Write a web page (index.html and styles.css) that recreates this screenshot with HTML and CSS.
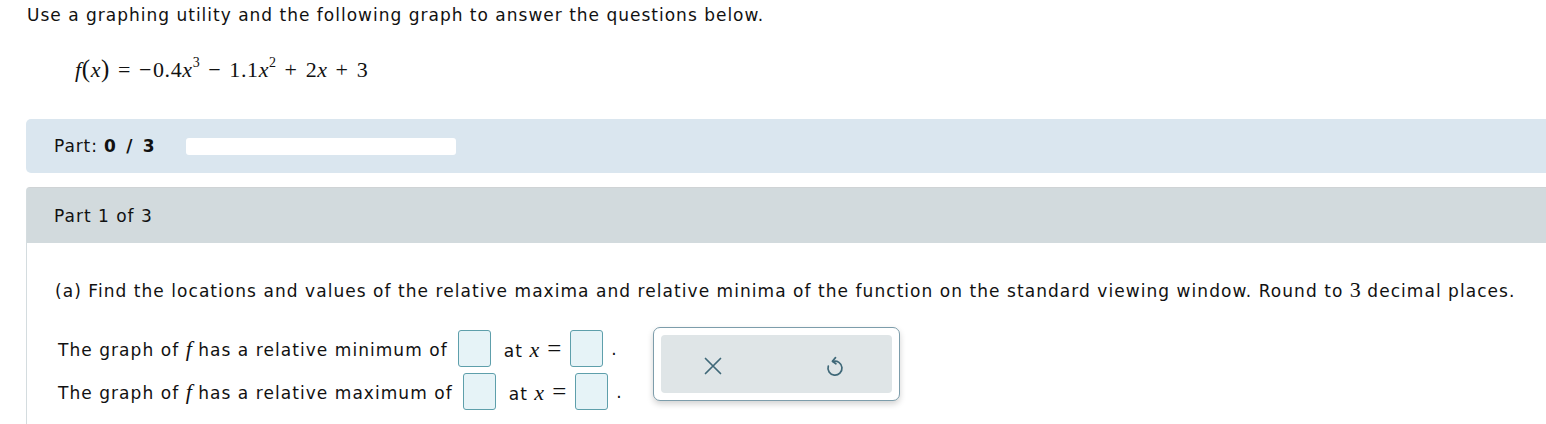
FILE: index.html
```html
<!DOCTYPE html>
<html>
<head>
<meta charset="utf-8">
<link rel="stylesheet" href="styles.css">
</head>
<body>
<div class="intro">Use a graphing utility and the following graph to answer the questions below.</div>
<div class="formula"><span class="it">f</span><span class="paren">(</span><span class="it">x</span><span class="paren">)</span><span class="op">=</span><span class="minus">−</span>0.4<span class="it">x</span><sup>3</sup><span class="op">−</span>1.1<span class="it">x</span><sup>2</sup><span class="op">+</span>2<span class="it">x</span><span class="op">+</span>3</div>

<div class="partbar">
  <span class="partlabel">Part: <b>0 / 3</b></span>
  <span class="progress"></span>
</div>

<div class="panel">
  <div class="panel-head">Part 1 of 3</div>
  <div class="panel-body">
    <p class="question">(a) Find the locations and values of the relative maxima and relative minima of the function on the standard viewing window. Round to <span class="num">3</span> decimal places.</p>
    <div class="answer">
      <div class="rows">
        <div class="row"><span class="txt">The graph of <span class="fi">f</span> has a relative minimum of</span><span class="box"></span><span class="at">at <span class="mx">x</span><span class="eq">=</span></span><span class="box box2"></span><span class="dot">.</span></div>
        <div class="row"><span class="txt">The graph of <span class="fi">f</span> has a relative maximum of</span><span class="box"></span><span class="at">at <span class="mx">x</span><span class="eq">=</span></span><span class="box box2"></span><span class="dot">.</span></div>
      </div>
      <div class="tools">
        <div class="tools-inner">
          <svg class="icon" width="18" height="18" viewBox="0 0 18 18"><path d="M1.5 1.5 L16.5 16.5 M16.5 1.5 L1.5 16.5" stroke="#3f6878" stroke-width="1.7" fill="none" stroke-linecap="round"/></svg>
          <svg class="icon" width="20" height="22" viewBox="0 0 20 22"><path d="M8 6.4 A7 7 0 1 1 3.3 11" stroke="#3f6878" stroke-width="1.7" fill="none" stroke-linecap="round"/><path d="M10.5 2.6 L7.4 6.3 L10.9 8.8" stroke="#3f6878" stroke-width="1.7" fill="none" stroke-linecap="round" stroke-linejoin="round"/></svg>
        </div>
      </div>
    </div>
  </div>
</div>
</body>
</html>
```

FILE: styles.css
```css
html, body {
  margin: 0;
  padding: 0;
  background: #ffffff;
}
body {
  font-family: "DejaVu Sans", Verdana, sans-serif;
  font-size: 17px;
  color: #111;
  width: 1546px;
  overflow: hidden;
}
.intro {
  padding: 5px 0 0 27px;
  line-height: 20px;
  letter-spacing: 1px;
}
.formula {
  font-family: "Liberation Serif", "Times New Roman", serif;
  font-size: 22px;
  padding: 29px 0 0 75px;
  height: 40px;
  line-height: 30px;
  letter-spacing: 0.6px;
}
.formula .it { font-style: italic; }
.formula .paren { font-size: 25px; }
.formula .op { margin: 0 8px; }
.formula .minus { margin-right: 1px; }
.formula sup {
  font-size: 14px;
  vertical-align: 10px;
  line-height: 0;
}
.partbar {
  margin: 25px 0 0 26px;
  height: 54px;
  background: #dae6ef;
  border-radius: 5px 0 0 5px;
  display: flex;
  align-items: center;
  padding-left: 28px;
  letter-spacing: 0.9px;
}
.partlabel {
  width: 132px;
}
.partlabel b { letter-spacing: 2.2px; }
.progress {
  width: 270px;
  height: 17px;
  background: #fff;
  border-radius: 3px;
}
.panel {
  margin: 14px 0 0 26px;
  border-left: 1px solid #d4dcdf;
  border-top: 1px solid #cfd3d5;
  border-radius: 4px 0 0 0;
  height: 240px;
}
.panel-head {
  background: #d2dadd;
  height: 55px;
  display: flex;
  align-items: center;
  padding-left: 27px;
  letter-spacing: 1px;
}
.panel-body {
  padding: 35px 0 0 28px;
}
.question {
  margin: 0;
  line-height: 24px;
  letter-spacing: 1.05px;
}
.num {
  font-family: "Liberation Serif", serif;
  font-size: 22px;
  letter-spacing: 0;
}
.answer {
  display: flex;
  margin-top: 24px;
  margin-left: 3px;
}
.rows {
  padding-top: 3px;
}
.row {
  display: flex;
  align-items: center;
  height: 37px;
  margin-bottom: 6px;
  white-space: pre;
  letter-spacing: 1.05px;
}
.fi, .mx {
  font-family: "Liberation Serif", serif;
  font-style: italic;
  font-size: 22px;
  letter-spacing: 0;
}
.eq {
  font-family: "Liberation Serif", serif;
  font-size: 25px;
  margin-left: 8px;
  letter-spacing: 0;
}
.box {
  display: inline-block;
  width: 31px;
  height: 35px;
  background: #e6f3f7;
  border: 1px solid #5e9fab;
  border-radius: 3px;
  margin-left: 10px;
}
.at { margin-left: 13px; }
.box2 { margin-left: 9px; }
.dot { margin-left: 8px; }
.tools {
  margin-left: 30px;
  width: 247px;
  height: 74px;
  border: 1px solid #7d9dab;
  border-radius: 7px;
  box-shadow: 0 3px 6px rgba(0,0,0,0.18);
  padding: 7px;
  box-sizing: border-box;
  display: flex;
  background: #fff;
}
.tools-inner {
  flex: 1;
  background: #dfe5e7;
  border-radius: 4px;
  display: flex;
  align-items: center;
  justify-content: space-between;
  padding: 4px 47px 0 43px;
}
.icon { display: block; }
```
